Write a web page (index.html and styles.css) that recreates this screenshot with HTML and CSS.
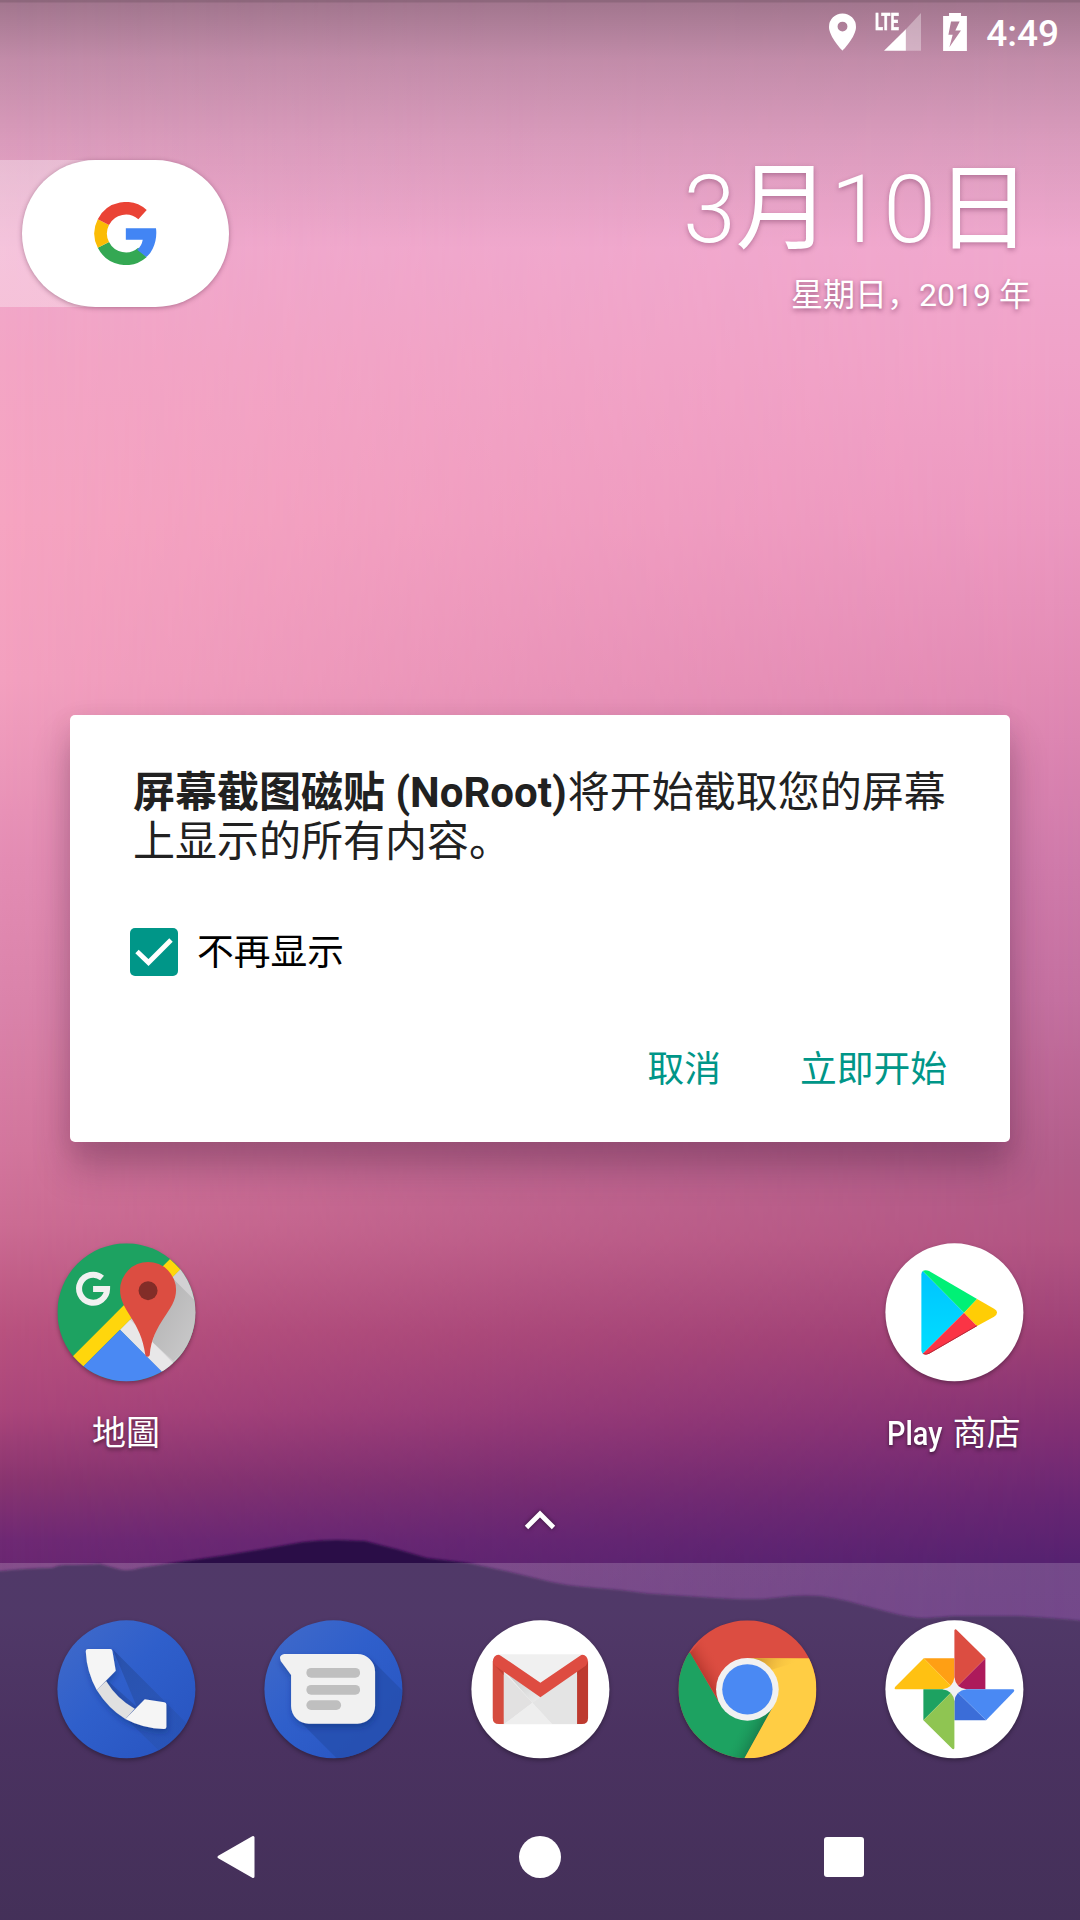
FILE: index.html
```html
<!DOCTYPE html>
<html lang="zh-CN">
<head>
<meta charset="utf-8">
<title>屏幕截图磁贴</title>
<link rel="stylesheet" href="styles.css">
</head>
<body>
<main class="screen">
  <div class="wallpaper">
    <div class="sky"></div>
    <svg class="hills" viewBox="0 1530 1080 390" aria-hidden="true">
      <defs><filter id="soft"><feGaussianBlur stdDeviation="1.1"/></filter></defs>
      <path filter="url(#soft)" fill="#290c46" d="M-5 1571 L0 1571 Q30 1568 52 1568 Q58 1565 65 1565 Q85 1565 100 1564 L118 1569 Q127 1572 140 1568 L172 1563 L227 1555 L269 1548 L303 1542 Q320 1540 337 1540 L365 1541 Q380 1545 396 1549 L427 1558 L468 1563 L510 1572 L551 1582 Q570 1586 585 1587 L620 1590 L647 1593.500 L716 1598 Q745 1600 764 1599 L792 1596 Q806 1595 820 1596 Q835 1598 847 1601 L888 1612 Q910 1618 926 1618 L954 1616 L1019 1616 Q1055 1618 1085 1621 V1925 H-5 Z"/>
    </svg>
    <div class="top-scrim"></div>
  </div>

  <header class="status-bar">
    <svg class="pin" viewBox="87 38 82 113"><path fill="#fff" fill-rule="evenodd" d="M128 38a41 41 0 0 0-41 41c0 30 41 72 41 72s41-42 41-72a41 41 0 0 0-41-41zm0 25a15 15 0 1 1 0 30a15 15 0 0 1 0-30z"/></svg>
    <div class="signal">
      <svg viewBox="253 38 110 113"><path fill="#fff" fill-opacity=".35" d="M363 38V150H318V86z"/><path fill="#fff" d="M318 86V150H253z"/></svg>
      <span class="lte">LTE</span>
    </div>
    <svg class="battery" viewBox="429 36 72 115"><path fill="#fff" fill-rule="evenodd" d="M447 36h36v9h18v106h-72V45h18zM453 62l-8 40h13l-10 38 35-51h-17l13-27z"/></svg>
    <time class="clock">4:49</time>
  </header>

  <section class="widgets">
    <div class="search-dock">
      <div class="search-pill">
        <svg class="g-logo" viewBox="281 215 188 190" fill="none" stroke-width="38">
          <path stroke="#34a853" d="M308.300 344.500A76 76 0 0 0 426 367.400"/>
          <path stroke="#fbbc05" d="M308.300 275.500A76 76 0 0 0 308.300 344.500"/>
          <path stroke="#ea4335" d="M426.400 253.100A76 76 0 0 0 308.300 275.500"/>
          <path fill="#4285f4" d="M376 294H467Q471 328 457 356Q450 371 438 381L410 359Q424 348 427 329H376z"/>
        </svg>
      </div>
    </div>
    <div class="date">
      <div class="date-main">3<span class="han">月</span>10<span class="han">日</span></div>
      <div class="date-sub">星期日，2019 年</div>
    </div>
  </section>

  <section class="home-row">
    <div class="app">
      <svg class="app-icon" viewBox="52 69 414 414">
        <defs>
          <clipPath id="mapClip"><circle cx="259" cy="276" r="207"/></clipPath>
          <linearGradient id="pinShade" x1="0" y1="0" x2="1" y2="1"><stop offset="0" stop-color="#9c9c9c"/><stop offset="1" stop-color="#c8c8c8"/></linearGradient>
        </defs>
        <g clip-path="url(#mapClip)">
          <rect x="52" y="69" width="414" height="414" fill="#1da261"/>
          <path fill="#d2d1d3" d="M420 147L240 328L398 490H480V147z"/>
          <path fill="url(#pinShade)" d="M392 168L466 242V365L400 422L344 372L325 410z" opacity=".65"/>
          <path fill="#e8e7e8" d="M270 298L240 328L372 460L402 430L343 371z"/>
          <path fill="#ffd60c" d="M390 116L421 147L125 443L94 412z"/>
          <path fill="#4a89f3" d="M240 328L366 454L340 490H120L125 443z"/>
        </g>
        <path fill="none" stroke="#f1f1f1" stroke-width="18" d="M186 173A42 42 0 1 0 201 206H159"/>
        <path fill="#dc4d41" d="M324 125A84 84 0 0 0 240 209C240 272 303 300 316 405Q322 414 329 405C337 305 408 272 408 209A84 84 0 0 0 324 125z"/>
        <circle cx="324" cy="211" r="28.500" fill="#822d28"/>
      </svg>
      <span class="app-label">地圖</span>
    </div>
    <div class="app">
      <svg class="app-icon" viewBox="76 69 414 414">
        <defs><linearGradient id="playBlue" x1="0" y1="0" x2="0" y2="1"><stop offset="0" stop-color="#00c3ff"/><stop offset="1" stop-color="#00dfff"/></linearGradient></defs>
        <circle cx="283" cy="276" r="207" fill="#fff"/>
        <path fill="url(#playBlue)" d="M188 152L312 277L188 400Q184 396 184 390V162Q184 156 188 152z"/>
        <path fill="#00f076" d="M188 152Q196 147 207 152L351 236L312 277z"/>
        <path fill="#fb3445" d="M188 400Q196 405 207 400L351 317L312 277z"/>
        <path fill="#ffcd05" d="M351 236L402 265Q420 276 402 289L351 317L312 277z"/>
        <path fill="none" stroke="#b52a3b" stroke-width="3" d="M190 400Q198 404 207 399L351 316"/>
      </svg>
      <span class="app-label"><span class="latin">Play</span> 商店</span>
    </div>
  </section>

  <div class="drawer-hint">
    <svg viewBox="0 0 34 22"><path d="M3.500 18.500L17 5L30.500 18.500" fill="none" stroke="#fff" stroke-width="4.800"/></svg>
  </div>

  <footer class="hotseat">
    <div class="dock">
      <svg class="app-icon" viewBox="52 61 414 414">
        <defs>
          <linearGradient id="blue" x1="0" y1="0" x2="1" y2="1"><stop offset="0" stop-color="#426bc9"/><stop offset=".45" stop-color="#2f5fcb"/><stop offset="1" stop-color="#2753bf"/></linearGradient>
          <linearGradient id="longShade" x1="0" y1="0" x2="1" y2="1"><stop offset="0" stop-color="#2850a9"/><stop offset="1" stop-color="#2850a9" stop-opacity=".25"/></linearGradient>
          <clipPath id="phoneClip"><circle cx="259" cy="268" r="207"/></clipPath>
          <clipPath id="msgClip"><circle cx="880" cy="268" r="207"/></clipPath>
          <filter id="iconShadow" x="-20%" y="-20%" width="150%" height="150%"><feDropShadow dx="3" dy="10" stdDeviation="9" flood-color="#102a68" flood-opacity=".38"/></filter>
        </defs>
        <circle cx="259" cy="268" r="207" fill="url(#blue)"/>
        <path clip-path="url(#phoneClip)" fill="url(#longShade)" d="M218 148L466 396L380 475L170 270L200 240L290 320z"/>
        <g filter="url(#iconShadow)">
          <path fill="#e0e0e0" d="M198 243Q232 298 284 326L256 357Q205 326 170 270z"/>
          <path fill="#f5f5f5" d="M144 147H211Q216 147 217 153L227 212L170 270Q140 217 137 154Q137 147 144 147z"/>
          <path fill="#f5f5f5" d="M314 298L373 307Q379 308 379 314V380Q379 387 372 387Q310 386 256 357z"/>
        </g>
      </svg>
      <svg class="app-icon" viewBox="673 61 414 414">
        <circle cx="880" cy="268" r="207" fill="url(#blue)"/>
        <path clip-path="url(#msgClip)" fill="#264fae" opacity=".8" d="M990 175L1100 285V475H890L770 355z"/>
        <path filter="url(#iconShadow)" fill="#f1f1f1" d="M732 162H952A53 53 0 0 1 1005 215V318A53 53 0 0 1 952 371H806A53 53 0 0 1 753 318V225L722 183Q714 166 732 162z"/>
        <g fill="#bfbfbf"><rect x="799" y="204" width="161" height="29" rx="14"/><rect x="799" y="255" width="161" height="29" rx="14"/><rect x="799" y="301" width="104" height="29" rx="14"/></g>
      </svg>
      <svg class="app-icon" viewBox="63 60 414 414">
        <defs><linearGradient id="foldShade" x1="0" y1="0" x2="1" y2="1"><stop offset="0" stop-color="#c6c6c6"/><stop offset="1" stop-color="#ececec"/></linearGradient></defs>
        <circle cx="270" cy="267" r="207" fill="#fff"/>
        <rect x="145" y="162" width="250" height="210" fill="#f0f0f0"/>
        <path fill="#e2e1e1" d="M160 215L246 307L162 371H160z"/>
        <path fill="url(#foldShade)" d="M160 208L270 290L246 307z"/>
        <path fill="#e4e4e4" d="M270 290L380 210V371H305L246 307z"/>
        <path fill="#eeeeee" d="M246 307L305 371H162z"/>
        <path fill="#d54c3f" d="M127 182L160 205V371H145Q127 371 127 353z"/>
        <path fill="#be3a2f" d="M413 182L380 205V371H395Q413 371 413 353z"/>
        <path fill="#b5382d" opacity=".55" d="M129 190L160 212V225zM411 190L380 212V225z"/>
        <path fill="#de4c41" d="M270 247L151 166Q141 160 132 169Q122 184 134 196L270 291L406 196Q418 184 408 169Q399 160 389 166z"/>
      </svg>
      <svg class="app-icon" viewBox="55 60 414 414">
        <defs>
          <clipPath id="chromeClip"><circle cx="262" cy="267" r="207"/></clipPath>
          <linearGradient id="redShade" gradientUnits="userSpaceOnUse" x1="125" y1="235" x2="185" y2="200"><stop offset="0" stop-color="#a32b23" stop-opacity=".75"/><stop offset="1" stop-color="#dc4d41" stop-opacity="0"/></linearGradient>
          <linearGradient id="greenShade" gradientUnits="userSpaceOnUse" x1="298" y1="400" x2="240" y2="370"><stop offset="0" stop-color="#17784a" stop-opacity=".85"/><stop offset="1" stop-color="#1da261" stop-opacity="0"/></linearGradient>
          <linearGradient id="yellowShade" gradientUnits="userSpaceOnUse" x1="300" y1="174" x2="400" y2="215"><stop offset="0" stop-color="#d39b35"/><stop offset="1" stop-color="#ffcd44" stop-opacity="0"/></linearGradient>
        </defs>
        <g clip-path="url(#chromeClip)">
          <rect x="55" y="60" width="414" height="414" fill="#dc4d41"/>
          <path fill="url(#redShade)" d="M90 157L175 300L260 174L150 90z"/>
          <path fill="#1da261" d="M90 157L181 313L262 360L342 313L253 474H55V157z"/>
          <path fill="url(#greenShade)" d="M342 313L253 474H190L262 350z"/>
          <path fill="#ffcd44" d="M262 174H469V474H253L342 313z"/>
          <path fill="url(#yellowShade)" d="M270 174H447L330 210z"/>
        </g>
        <circle cx="262" cy="267" r="94" fill="#f1f1f1"/>
        <circle cx="262" cy="267" r="75.500" fill="#4a89f3"/>
      </svg>
      <svg class="app-icon" viewBox="675 60 414 414">
        <circle cx="882" cy="267" r="207" fill="#fff"/>
        <path fill="#ff9f14" d="M790 174H882V267z"/>
        <path fill="#ffc112" d="M790 174L882 267H705Q700 265 704 260z"/>
        <path fill="#ad1a5b" d="M975 174V267H882z"/>
        <path fill="#dc4d41" d="M882 90Q885 84 889 89L975 174L882 267z"/>
        <path fill="#3b6dd8" d="M882 267V360H977z"/>
        <path fill="#4a89f3" d="M882 267H1059Q1064 269 1060 274L977 360z"/>
        <path fill="#1da261" d="M789 267H882L789 360z"/>
        <path fill="#8fc552" d="M882 267V444Q879 449 874 444L789 360z"/>
        <path fill="#f1f1f1" d="M882 231Q886 263 918 267Q886 271 882 303Q878 271 846 267Q878 263 882 231z"/>
      </svg>
    </div>
    <nav class="nav-bar">
      <svg viewBox="0 0 60 60"><path fill="#fff" stroke="#fff" stroke-width="3" stroke-linejoin="round" d="M13 30L47 10.500V49.500z"/></svg>
      <svg viewBox="0 0 60 60"><circle cx="30" cy="30" r="21" fill="#fff"/></svg>
      <svg viewBox="0 0 60 60"><rect x="10" y="10" width="40" height="40" rx="3" fill="#fff"/></svg>
    </nav>
  </footer>

  <div class="dialog" role="dialog">
    <p class="message"><b>屏幕截图磁贴 (NoRoot)</b>将开始截取您的屏幕上显示的所有内容。</p>
    <label class="remember">
      <svg class="checkbox" viewBox="0 0 48 48"><rect width="48" height="48" rx="5" fill="#009688"/><path d="M7 23.500L18.500 34.500L41 12" fill="none" stroke="#fff" stroke-width="4.900"/></svg>
      <span>不再显示</span>
    </label>
    <div class="actions"><button class="action">取消</button><button class="action">立即开始</button></div>
  </div>
</main>
</body>
</html>
```
FILE: styles.css
```css
* { box-sizing: border-box; }

body {
  margin: 0;
  font-family: Roboto, "Noto Sans CJK SC", sans-serif;
}

.screen {
  position: relative;
  display: flex;
  flex-direction: column;
  width: 1080px;
  height: 1920px;
  overflow: hidden;
  color: #fff;
}

svg { display: block; flex: none; }

/* Wallpaper: warm left side blended into a cooler right side */
.wallpaper {
  position: absolute;
  inset: 0;
  background: linear-gradient(180deg,
    #e4a6c8 0, #f0a8cc 240px, #f3a5c5 360px, #f6a4c1 520px, #f3a0bf 680px,
    #e48db4 860px, #db84ab 1000px, #d3769d 1150px, #cc6c93 1225px, #b9527f 1330px,
    #ab467b 1410px, #8a3570 1480px, #6f2974 1540px, #64256f 1600px);
}

.sky {
  position: absolute;
  inset: 0;
  background: linear-gradient(180deg,
    #e4a6c8 0, #f0a8ce 240px, #f0a2c8 360px, #ec98c0 520px, #e28ab4 680px,
    #cf7aaa 860px, #c36f9f 1000px, #b25d8a 1160px, #b25583 1240px, #9c3f75 1340px,
    #812f74 1430px, #682673 1500px, #562270 1560px, #542070 1620px);
  -webkit-mask-image: linear-gradient(90deg, transparent 0, rgba(0,0,0,.55) 50%, #000 100%);
  mask-image: linear-gradient(90deg, transparent 0, rgba(0,0,0,.55) 50%, #000 100%);
}

.hills {
  position: absolute;
  left: 0;
  bottom: 0;
  width: 1080px;
  height: 390px;
}

.top-scrim {
  position: absolute;
  inset: 0 0 auto;
  height: 250px;
  background: linear-gradient(180deg, rgba(0,0,0,.38) 0 2px, rgba(0,0,0,.29) 3px, rgba(0,0,0,.16) 60px, rgba(0,0,0,.075) 140px, transparent);
}

.status-bar {
  position: relative;
  display: flex;
  justify-content: flex-end;
  align-items: flex-start;
  height: 63px;
  padding: 12.500px 21px 0 0;
}

.pin { width: 27px; height: 38px; margin-right: 20px; }

.signal { position: relative; width: 45px; padding-left: 8px; margin-right: 22px; }
.signal svg { width: 37px; height: 38px; }

.lte {
  position: absolute;
  left: -1px;
  top: -1.500px;
  font: 700 23px/24px Roboto, sans-serif;
  -webkit-text-stroke: .7px #fff;
  transform: scaleX(.64);
  transform-origin: left;
}

.battery { width: 24px; height: 38px; margin-right: 19px; }

.clock { font-size: 37px; font-weight: 500; line-height: 43px; margin-top: -1px; }

.widgets {
  position: relative;
  display: flex;
  justify-content: space-between;
  height: 180px;
  margin-top: 97px;
}

.search-dock {
  width: 229px;
  height: 147px;
  padding-left: 22px;
  background: linear-gradient(90deg, rgba(255,255,255,.32) 0 125px, transparent 125px);
}

.search-pill {
  display: flex;
  align-items: center;
  justify-content: center;
  height: 147px;
  border-radius: 74px;
  background: #fff;
  box-shadow: 0 1px 5px rgba(70,20,50,.38);
}

.g-logo { width: 63px; height: 63px; }

.date { padding-right: 49px; text-align: right; text-shadow: 0 2px 5px rgba(80,20,60,.35); }
.date-main { font-size: 95px; font-weight: 300; line-height: 112px; margin-top: -6px; }
.han { font-weight: 400; }
.date-sub { font-size: 32px; line-height: 40px; margin-top: 9px; text-shadow: 0 2px 5px rgba(80,20,60,.55); }

.home-row {
  position: relative;
  display: flex;
  justify-content: space-between;
  padding: 0 22.500px;
  margin-top: 903px;
}

.app {
  display: flex;
  flex-direction: column;
  align-items: center;
  width: 207px;
}

.app-icon {
  width: 138px;
  height: 138px;
  overflow: visible;
  filter: drop-shadow(0 2px 2px rgba(0,0,0,.32));
  transform: translate(.4px, .3px);
}

.app-label {
  margin-top: 31px;
  font-size: 34px;
  line-height: 42px;
  white-space: pre;
  text-shadow: 0 2px 4px rgba(0,0,0,.5);
  font-family: Roboto, "Noto Sans CJK TC", sans-serif;
}

.latin { display: inline-block; width: 57px; font-weight: 500; transform: scaleX(.85); transform-origin: left; }

.drawer-hint {
  position: relative;
  display: flex;
  justify-content: center;
  margin-top: 55px;
}
.drawer-hint svg { width: 34px; height: 22px; filter: drop-shadow(0 0 2px rgba(0,0,0,.5)); }

.hotseat {
  position: relative;
  height: 357px;
  margin-top: auto;
  padding: 57px 22.500px 0;
  background: linear-gradient(180deg, rgba(255,255,255,.18) 0 50px, rgba(223,218,214,.18) 170px, rgba(150,160,145,.24) 100%);
}

.dock { display: grid; grid-template-columns: repeat(5, 207px); justify-items: center; }

.nav-bar {
  display: flex;
  justify-content: space-between;
  width: 668px;
  margin: 69px auto 0;
}
.nav-bar svg { width: 60px; height: 60px; }

.dialog {
  position: absolute;
  left: 70px;
  top: 715px;
  width: 940px;
  height: 427px;
  padding: 53px 63px 0;
  border-radius: 5px;
  background: #fff;
  color: #212121;
  box-shadow: 0 26px 36px rgba(60,20,50,.3), 0 4px 24px rgba(60,20,50,.08);
}

.message { margin: 0 -5px 0 0; font-size: 42px; line-height: 49px; }
.message b { font-weight: 700; margin-right: 1px; }

.remember {
  display: flex;
  align-items: flex-start;
  gap: 19px;
  margin: 62px 0 0 -3px;
  color: #000;
  font-size: 36.750px;
  line-height: 48px;
}
.remember span { padding-top: 1px; }
.checkbox { width: 48px; height: 48px; }

.actions { display: flex; justify-content: flex-end; gap: 79px; margin: 67px 0 0; }

.action {
  padding: 0;
  border: 0;
  background: none;
  color: #009688;
  font: 400 36.750px/52px Roboto, "Noto Sans CJK SC", sans-serif;
}
```
